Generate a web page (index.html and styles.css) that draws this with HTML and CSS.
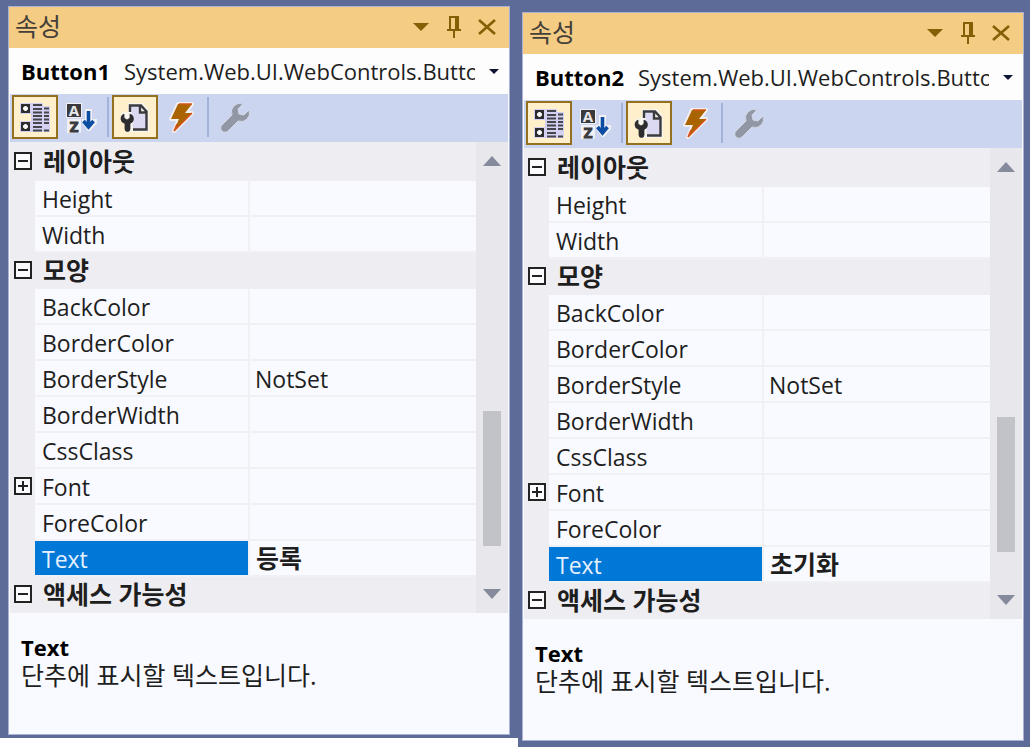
FILE: index.html
```html
<!DOCTYPE html>
<html lang="ko">
<head>
<meta charset="utf-8">
<meta name="viewport" content="width=device-width, initial-scale=1">
<title>속성</title>
<link rel="stylesheet" href="styles.css">
</head>
<body>
<svg class="sprite" aria-hidden="true">
  <symbol id="i-down" viewBox="0 0 16 8"><path d="M0 0h16L8 8z" fill="currentColor"/></symbol>
  <symbol id="i-up" viewBox="0 0 18 10"><path d="M0 10h18L9 0z" fill="currentColor"/></symbol>
  <symbol id="i-pin" viewBox="0 0 14 22"><path d="M3 14V1h8v13M0 14h14M7 14v8" fill="none" stroke="currentColor" stroke-width="2"/><path d="M8 1h3v13H8z" fill="currentColor"/></symbol>
  <symbol id="i-close" viewBox="0 0 18 16"><path d="M1 1l16 14M17 1L1 15" fill="none" stroke="currentColor" stroke-width="2.6"/></symbol>
  <symbol id="i-minus" viewBox="0 0 18 18"><path d="M1 1h16v16H1z" fill="#fbfbfd" stroke="#222" stroke-width="2"/><path d="M4 9h10" stroke="#222" stroke-width="2"/></symbol>
  <symbol id="i-plus" viewBox="0 0 18 18"><path d="M1 1h16v16H1z" fill="#fbfbfd" stroke="#222" stroke-width="2"/><path d="M4 9h10M9 4v10" stroke="#222" stroke-width="2"/></symbol>
  <symbol id="i-category" viewBox="0 0 32 32">
    <path d="M1 2h11v11H1zM1 20h11v11H1zM12 2h12v29H12zM23 5h8v26h-8z" fill="#d3d0f2"/>
    <path d="M2 3h9v9H2zM2 21h9v9H2z" fill="#2d2d30"/>
    <path d="M6.500 5v5M4 7.500h5M6.500 23v5M4 25.500h5" stroke="#fff" stroke-width="2.400"/>
    <path d="M14 4h9M14 8h9M14 11.500h9M14 15h9M14 18.500h9M14 22h9M14 26h9M14 29.500h9M25 7.500h5M25 11.500h5M25 15h5M25 18.500h5M25 22h5M25 29.500h5" stroke="#45454c" stroke-width="1.800"/>
  </symbol>
  <symbol id="i-page" viewBox="0 0 32 32">
    <path d="M9 2h15l6 7v22H7l-1-8-4-3v-8l7-1z" fill="#f8f4ee"/>
    <path d="M12 6h9v7h6v15H14z" fill="#dcd9f2"/>
    <path d="M11 11V4.500h11l5.500 6V28.500H14M21 5v6.500h6.500" fill="none" stroke="#3b3b3f" stroke-width="2.400"/>
    <path d="M5 13v4l3 2 3-2v-4a5 5 0 0 1 0 9.500V28a2 2 0 0 1-5 0v-5.500A5 5 0 0 1 5 13z" fill="#2d2d30" stroke="#2d2d30" stroke-width=".8"/>
  </symbol>
  <symbol id="i-bolt" viewBox="0 0 32 32">
    <path d="M13 3h14l-7 9h7L9 30l5-12H6z" fill="#a86200" stroke="#f3efef" stroke-width="4" stroke-linejoin="round"/>
    <path d="M13 3h14l-7 9h7L9 30l5-12H6z" fill="#a96400"/>
    <path d="M27 3H14M27 12L9 30l3-7" fill="none" stroke="#d3541c" stroke-width="1.500"/>
  </symbol>
  <symbol id="i-wrench" viewBox="0 0 32 32">
    <path d="M24 3a8.500 8.500 0 0 0-11 11L3 24a4 4 0 0 0 6 6l10-10A8.500 8.500 0 0 0 30 9l-5 5-5-1-1-5z" fill="#9197a4" stroke="#d4d8e4" stroke-width="1"/>
  </symbol>
</svg>

<main class="workspace">
  <div class="dock">
    <section class="panel" aria-labelledby="title-1">
      <header class="titlebar">
        <h2 class="title" id="title-1">속성</h2>
        <button class="window-btn" type="button" aria-label="창 위치"><svg class="icon-menu"><use href="#i-down"/></svg></button>
        <button class="window-btn" type="button" aria-label="자동 숨기기"><svg class="icon-pin"><use href="#i-pin"/></svg></button>
        <button class="window-btn" type="button" aria-label="닫기"><svg class="icon-close"><use href="#i-close"/></svg></button>
      </header>
      <div class="object">
        <label class="object-name" for="object-1">Button1</label>
        <select class="object-type" id="object-1"><option>System.Web.UI.WebControls.Button</option></select>
        <svg class="object-arrow"><use href="#i-down"/></svg>
      </div>
      <div class="toolbar" role="toolbar" aria-label="속성 도구">
        <button class="tool is-on" type="button" aria-label="항목별"><svg><use href="#i-category"/></svg></button>
        <button class="tool" type="button" aria-label="사전순">
          <svg viewBox="0 0 32 32">
            <path d="M1 2h16v15H1zM2 18h14v14H2zM20 8h7v10h5v4l-7 8h-2l-6-8v-4h3z" fill="#f1f0f4"/>
            <path d="M2 3h14v13H2z" fill="#3a3a3e"/>
            <text x="9" y="15" class="glyph glyph-a">A</text>
            <text x="9" y="31" class="glyph glyph-z">Z</text>
            <path d="M23.500 10v16M18.500 20l5 6 5-6" fill="none" stroke="#0b4da2" stroke-width="3.600"/>
          </svg>
        </button>
        <span class="separator"></span>
        <button class="tool is-on" type="button" aria-label="속성"><svg><use href="#i-page"/></svg></button>
        <button class="tool" type="button" aria-label="이벤트"><svg><use href="#i-bolt"/></svg></button>
        <span class="separator"></span>
        <button class="tool" type="button" aria-label="속성 페이지" disabled><svg><use href="#i-wrench"/></svg></button>
      </div>
      <div class="browser">
        <table class="properties">
          <colgroup><col class="col-toggle"><col class="col-name"><col></colgroup>
          <tbody>
            <tr class="group first"><td><button class="toggle" type="button" aria-label="레이아웃 접기"><svg><use href="#i-minus"/></svg></button></td><th colspan="2">레이아웃</th></tr>
            <tr><td></td><th>Height</th><td></td></tr>
            <tr><td></td><th>Width</th><td></td></tr>
            <tr class="group"><td><button class="toggle" type="button" aria-label="모양 접기"><svg><use href="#i-minus"/></svg></button></td><th colspan="2">모양</th></tr>
            <tr><td></td><th>BackColor</th><td></td></tr>
            <tr><td></td><th>BorderColor</th><td></td></tr>
            <tr><td></td><th>BorderStyle</th><td>NotSet</td></tr>
            <tr><td></td><th>BorderWidth</th><td></td></tr>
            <tr><td></td><th>CssClass</th><td></td></tr>
            <tr><td><button class="toggle" type="button" aria-label="Font 펼치기"><svg><use href="#i-plus"/></svg></button></td><th>Font</th><td></td></tr>
            <tr><td></td><th>ForeColor</th><td></td></tr>
            <tr class="selected"><td></td><th>Text</th><td>등록</td></tr>
            <tr class="group"><td><button class="toggle" type="button" aria-label="액세스 가능성 접기"><svg><use href="#i-minus"/></svg></button></td><th colspan="2">액세스 가능성</th></tr>
          </tbody>
        </table>
        <div class="scrollbar">
          <button class="scroll-btn" type="button" aria-label="위로"><svg><use href="#i-up"/></svg></button>
          <div class="track"><div class="thumb"></div></div>
          <button class="scroll-btn" type="button" aria-label="아래로"><svg class="flip"><use href="#i-up"/></svg></button>
        </div>
      </div>
      <footer class="help">
        <h3 class="help-title">Text</h3>
        <p class="help-text">단추에 표시할 텍스트입니다.</p>
      </footer>
    </section>
  </div>

  <div class="dock dock-second">
    <section class="panel" aria-labelledby="title-2">
      <header class="titlebar">
        <h2 class="title" id="title-2">속성</h2>
        <button class="window-btn" type="button" aria-label="창 위치"><svg class="icon-menu"><use href="#i-down"/></svg></button>
        <button class="window-btn" type="button" aria-label="자동 숨기기"><svg class="icon-pin"><use href="#i-pin"/></svg></button>
        <button class="window-btn" type="button" aria-label="닫기"><svg class="icon-close"><use href="#i-close"/></svg></button>
      </header>
      <div class="object">
        <label class="object-name" for="object-2">Button2</label>
        <select class="object-type" id="object-2"><option>System.Web.UI.WebControls.Button</option></select>
        <svg class="object-arrow"><use href="#i-down"/></svg>
      </div>
      <div class="toolbar" role="toolbar" aria-label="속성 도구">
        <button class="tool is-on" type="button" aria-label="항목별"><svg><use href="#i-category"/></svg></button>
        <button class="tool" type="button" aria-label="사전순">
          <svg viewBox="0 0 32 32">
            <path d="M1 2h16v15H1zM2 18h14v14H2zM20 8h7v10h5v4l-7 8h-2l-6-8v-4h3z" fill="#f1f0f4"/>
            <path d="M2 3h14v13H2z" fill="#3a3a3e"/>
            <text x="9" y="15" class="glyph glyph-a">A</text>
            <text x="9" y="31" class="glyph glyph-z">Z</text>
            <path d="M23.500 10v16M18.500 20l5 6 5-6" fill="none" stroke="#0b4da2" stroke-width="3.600"/>
          </svg>
        </button>
        <span class="separator"></span>
        <button class="tool is-on" type="button" aria-label="속성"><svg><use href="#i-page"/></svg></button>
        <button class="tool" type="button" aria-label="이벤트"><svg><use href="#i-bolt"/></svg></button>
        <span class="separator"></span>
        <button class="tool" type="button" aria-label="속성 페이지" disabled><svg><use href="#i-wrench"/></svg></button>
      </div>
      <div class="browser">
        <table class="properties">
          <colgroup><col class="col-toggle"><col class="col-name"><col></colgroup>
          <tbody>
            <tr class="group first"><td><button class="toggle" type="button" aria-label="레이아웃 접기"><svg><use href="#i-minus"/></svg></button></td><th colspan="2">레이아웃</th></tr>
            <tr><td></td><th>Height</th><td></td></tr>
            <tr><td></td><th>Width</th><td></td></tr>
            <tr class="group"><td><button class="toggle" type="button" aria-label="모양 접기"><svg><use href="#i-minus"/></svg></button></td><th colspan="2">모양</th></tr>
            <tr><td></td><th>BackColor</th><td></td></tr>
            <tr><td></td><th>BorderColor</th><td></td></tr>
            <tr><td></td><th>BorderStyle</th><td>NotSet</td></tr>
            <tr><td></td><th>BorderWidth</th><td></td></tr>
            <tr><td></td><th>CssClass</th><td></td></tr>
            <tr><td><button class="toggle" type="button" aria-label="Font 펼치기"><svg><use href="#i-plus"/></svg></button></td><th>Font</th><td></td></tr>
            <tr><td></td><th>ForeColor</th><td></td></tr>
            <tr class="selected"><td></td><th>Text</th><td>초기화</td></tr>
            <tr class="group"><td><button class="toggle" type="button" aria-label="액세스 가능성 접기"><svg><use href="#i-minus"/></svg></button></td><th colspan="2">액세스 가능성</th></tr>
          </tbody>
        </table>
        <div class="scrollbar">
          <button class="scroll-btn" type="button" aria-label="위로"><svg><use href="#i-up"/></svg></button>
          <div class="track"><div class="thumb"></div></div>
          <button class="scroll-btn" type="button" aria-label="아래로"><svg class="flip"><use href="#i-up"/></svg></button>
        </div>
      </div>
      <footer class="help">
        <h3 class="help-title">Text</h3>
        <p class="help-text">단추에 표시할 텍스트입니다.</p>
      </footer>
    </section>
  </div>
</main>
</body>
</html>
```
FILE: styles.css
```css
* { box-sizing: border-box; }

body {
  margin: 0;
  background: #fff;
  color: #1e1e1e;
  font: 23px/32px "Open Sans", "Noto Sans CJK KR", sans-serif;
}

button, select { font: inherit; color: inherit; margin: 0; padding: 0; border: 0; background: none; }
svg { display: block; }
.sprite { position: absolute; width: 0; height: 0; }

.workspace {
  display: grid;
  grid-template-columns: minmax(0, 518fr) minmax(0, 512fr);
  min-height: 100vh;
}

.dock {
  display: flex;
  margin-bottom: 9px;
  padding: 6px 8px 3px;
  background: #5d6b99;
}
.dock-second { margin-bottom: 0; padding: 12px 6px 6px 4px; }

.panel {
  flex: 1;
  min-width: 0;
  display: flex;
  flex-direction: column;
  border: 1px solid #a9b2d2;
  background: #f9faff;
}

.titlebar {
  display: flex;
  align-items: center;
  height: 41px;
  padding: 0 6px;
  background: #f5cc84;
}
.title { flex: 1; margin: 0; padding-bottom: 4px; font-size: 25px; font-weight: 400; color: #444039; }
.window-btn { display: grid; place-items: center; width: 33px; height: 38px; padding-bottom: 2px; color: #855f06; }
.icon-menu { width: 16px; height: 8px; }
.icon-pin { width: 14px; height: 22px; }
.icon-close { width: 18px; height: 16px; }

.object {
  position: relative;
  display: flex;
  align-items: center;
  gap: 14px;
  height: 46px;
  padding: 0 34px 0 12px;
  background: #fdfdfd;
}
.object-name { font-size: 22px; font-weight: 700; color: #000; }
.object-type { appearance: none; flex: 1; width: 0; min-width: 0; height: 36px; overflow: hidden; border-radius: 0; font-size: 22px; text-overflow: clip; }
.object-arrow { position: absolute; right: 10px; top: 21px; width: 10px; height: 5px; color: #0d1530; pointer-events: none; }

.toolbar { display: flex; align-items: center; height: 48px; margin: 0 1px; padding: 0 2px 2px; background: #ccd5f0; }
.tool { display: grid; place-items: center; width: 46px; height: 44px; }
.tool svg { width: 32px; height: 32px; }
.tool.is-on { border: 2px solid #94711f; background: #ffefcb; }
.separator { width: 2px; height: 40px; margin: 0 3px; background: #a3b2d8; }
.glyph { font: 700 15px "Open Sans", sans-serif; text-anchor: middle; }
.glyph-a { fill: #e8e8ea; }
.glyph-z { fill: #3a3a3e; stroke: #3a3a3e; }

.browser { display: flex; margin: 0 1px; background: #eeedf2; }
.properties { flex: 1; min-width: 0; table-layout: fixed; border-collapse: separate; border-spacing: 0; }
.col-toggle { width: 25px; }
.col-name { width: 215px; }
.properties tr { height: 36px; }
.properties .first { height: 39px; }
.properties th, .properties td {
  height: 36px;
  padding: 2px 0 0 7px;
  border-bottom: 2px solid #f0f0f5;
  background: #f9faff;
  text-align: left;
  font-weight: 400;
  line-height: 32px;
  white-space: nowrap;
}
.properties th { border-right: 2px solid #f0f0f5; }
.properties td:last-child { padding-left: 5px; }
.properties td:first-child { padding: 0 0 0 4px; border-color: #eeedf2; background: #eeedf2; }
.properties .group th { padding: 0 0 0 8px; border-color: #eeedf2; background: #eeedf2; font-size: 25px; font-weight: 700; }
.properties .selected th { background: #0078d7; background-clip: padding-box; color: #e6f1ff; }
.properties .selected td { font-size: 25px; font-weight: 700; }
.properties .selected td:last-child { padding: 0 0 0 6px; }
.toggle { display: block; width: 18px; height: 18px; }
.toggle svg { width: 18px; height: 18px; }

.scrollbar { display: flex; flex-direction: column; width: 32px; background: #e8e7ec; }
.scroll-btn { display: grid; place-items: center; height: 38px; color: #858a9d; }
.scroll-btn svg { width: 18px; height: 10px; }
.flip { transform: rotate(180deg); }
.track { flex: 1; display: flex; flex-direction: column; justify-content: flex-end; align-items: center; padding-bottom: 29px; }
.thumb { width: 18px; height: 37%; background: #c2c3c9; }

.help { flex: 1; padding: 18px 12px 12px; }
.help-title { margin: 0; font-size: 22px; line-height: 32px; color: #000; }
.help-text { margin: 0; font-size: 25px; line-height: 24px; }
```
